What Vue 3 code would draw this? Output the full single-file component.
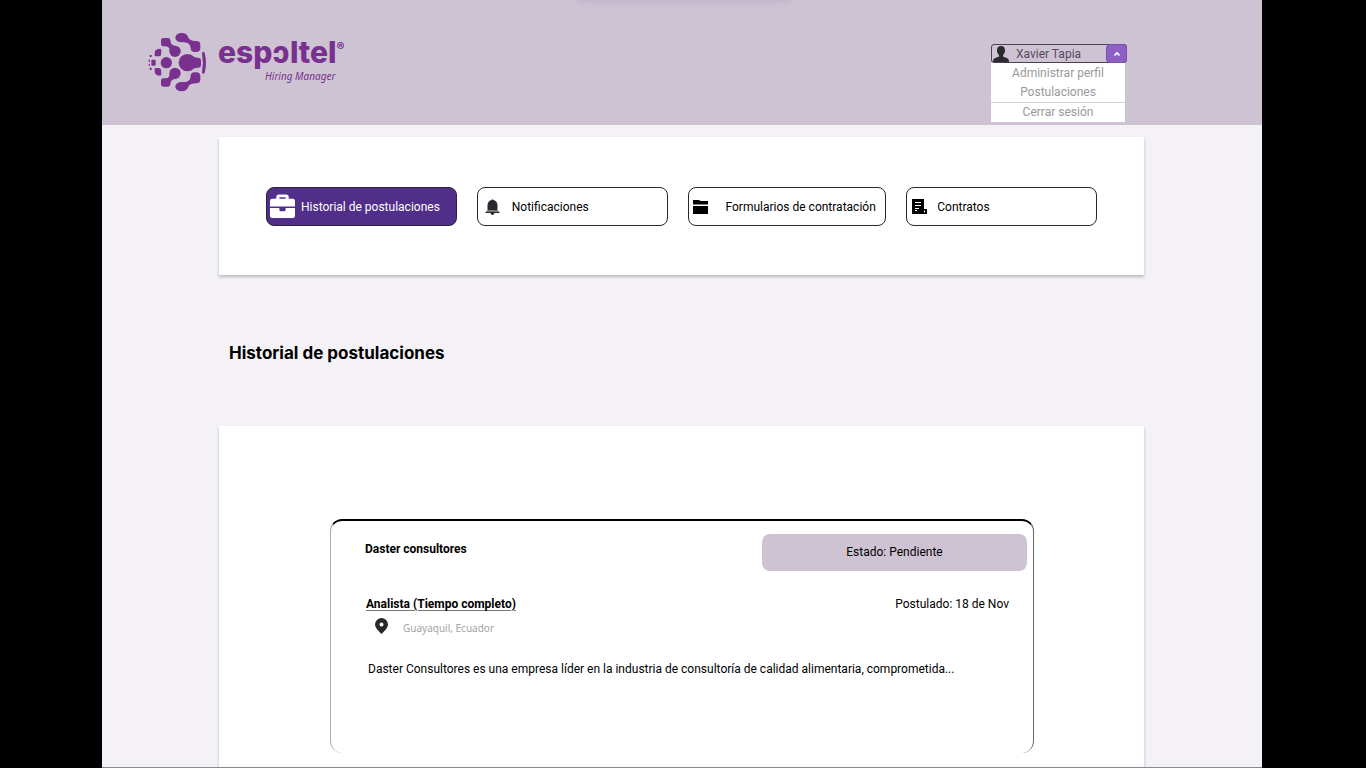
<script setup>
import { ref } from 'vue'

const menuOpen = ref(true)
const active = ref('historial')
const sections = [
  { id: 'historial', label: 'Historial de postulaciones' },
  { id: 'notificaciones', label: 'Notificaciones' },
  { id: 'formularios', label: 'Formularios de contratación' },
  { id: 'contratos', label: 'Contratos' },
]
const jobs = [
  {
    company: 'Daster consultores',
    status: 'Estado: Pendiente',
    role: 'Analista (Tiempo completo)',
    date: 'Postulado: 18 de Nov',
    place: 'Guayaquil, Ecuador',
    text: 'Daster Consultores es una empresa líder en la industria de consultoría de calidad alimentaria, comprometida...',
  },
]
</script>

<template>
  <div class="stage">
    <header class="top">
      <a class="brand" href="#">
        <svg class="mark" viewBox="24 36 180 180" aria-hidden="true">
          <g fill="#79308f">
            <ellipse cx="125" cy="53" rx="19" ry="14" />
            <rect x="152" y="63" width="29" height="33" rx="12" />
            <path d="M128 66 143 48Q146 62 164 63L153 84Q150 66 128 66z" />
            <rect x="63" y="54" width="28" height="25" rx="7" />
            <circle cx="105" cy="94" r="17" />
            <path d="M76 78 91 64Q93 77 108 78L90 95Q89 79 76 78z" />
            <ellipse cx="125" cy="200" rx="19" ry="14" />
            <rect x="152" y="157" width="29" height="33" rx="12" />
            <path d="M128 187 143 205Q146 191 164 190L153 169Q150 187 128 187z" />
            <rect x="63" y="175" width="28" height="25" rx="7" />
            <circle cx="105" cy="160" r="17" />
            <path d="M76 176 91 190Q93 177 108 176L90 159Q89 175 76 176z" />
            <path d="M45 94q3-8 15-8 5 0 4 7l-1 11q-1 5-6 5H47q-4 0-3-6zM45 159q3 8 15 8 5 0 4-7l-1-11q-1-5-6-5H47q-4 0-3 6z" />
            <rect x="34" y="119" width="13" height="18" rx="3" />
            <circle cx="79" cy="128" r="17" />
            <circle cx="142" cy="128" r="26" />
            <path d="M150 103Q162 114 174 113 183 113 183 122V134Q183 143 174 143 162 142 150 153z" />
            <path d="M186 99q3-7 8 0 8 30 0 59-5 6-8 0 5-30 0-59zM29 105h6v6h-6zM29 143h6v7h-6zM26 119h4v6h-4zM26 131h4v6h-4z" />
          </g>
        </svg>
        <span class="words">
          <span class="name">espɔltel<sup>®</sup></span>
          <span class="sub">Hiring Manager</span>
        </span>
      </a>

      <div class="account">
        <button class="user" type="button" :aria-expanded="menuOpen" @click="menuOpen = !menuOpen">
          <svg class="person" viewBox="0 0 16 16" aria-hidden="true">
            <path fill="#2b2a2e" d="M8 0c3 0 4 2 4 4.600 0 2-1 3.600-2 4.600v1.300l4.200 1.700C15.500 12.800 16 14 16 16H0c0-2 .5-3.200 1.800-3.800L6 10.500V9.200c-1-1-2-2.600-2-4.600C4 2 5 0 8 0z" />
          </svg>
          <span class="username">Xavier Tapia</span>
          <span class="caret">
            <svg viewBox="0 0 8 6" aria-hidden="true"><path d="M1.500 4.500 4 2l2.500 2.500" fill="none" stroke="#fff" stroke-width="1.700" /></svg>
          </span>
        </button>
        <nav v-if="menuOpen" class="menu" aria-label="Cuenta">
          <a href="#">Administrar perfil</a>
          <a href="#">Postulaciones</a>
          <a href="#" class="logout">Cerrar sesión</a>
        </nav>
      </div>
    </header>

    <main>
      <nav class="panel tabs" aria-label="Secciones">
        <button
          v-for="s in sections"
          :key="s.id"
          type="button"
          :class="['tab', s.id, { active: active === s.id }]"
          @click="active = s.id"
        >
          <svg v-if="s.id === 'historial'" class="icon" viewBox="0 0 24 24" aria-hidden="true">
            <path fill="currentColor" fill-rule="evenodd" d="M6 4.500V3q0-2.500 2.500-2.500h7Q18 .5 18 3v1.500h4q2 0 2 2V12H0V6.500q0-2 2-2zm3 0h6V3H9zM0 13.500h9V15q0 1.500 1.500 1.500h3Q15 16.500 15 15v-1.500h9V21q0 2-2 2H2q-2 0-2-2z" />
          </svg>
          <svg v-else-if="s.id === 'notificaciones'" class="icon" viewBox="0 0 14 16" aria-hidden="true">
            <path fill="#29282c" d="M6 1q1-1.500 2 0 4 1 4 5.500V11H2V6.500Q2 2 6 1zM5 14h4q-.5 2-2 2t-2-2z" />
            <path fill="#77767a" d="M2 11h10l2 2.500H0z" />
            <path fill="#29282c" d="M0 13h14v1H0z" />
          </svg>
          <svg v-else-if="s.id === 'formularios'" class="icon" viewBox="0 0 15 14" aria-hidden="true">
            <path fill="#000" d="M0 0h6l1.500 1H15v3.500H0zM0 6h15v8H0z" />
          </svg>
          <svg v-else class="icon" viewBox="0 0 15 15" aria-hidden="true">
            <path fill="#000" d="M0 0h12v10h3v5H0z" />
            <path d="M3 3.500h6M3 6.500h6M3 9.500h4M3 11.500h2M12.500 11.500v2" stroke="#fff" fill="none" />
          </svg>
          <span>{{ s.label }}</span>
        </button>
      </nav>

      <h1>Historial de postulaciones</h1>

      <section class="panel list">
        <article v-for="j in jobs" :key="j.company" class="job">
          <div class="row head">
            <h2>{{ j.company }}</h2>
            <span class="status">{{ j.status }}</span>
          </div>
          <div class="row role">
            <a href="#">{{ j.role }}</a>
            <span class="date">{{ j.date }}</span>
          </div>
          <div class="place">
            <svg viewBox="0 0 13 16" aria-hidden="true">
              <path fill="#29282c" fill-rule="evenodd" d="M6.500 0A6.500 6.500 0 0 1 13 6.500Q13 10 6.500 16 0 10 0 6.500A6.500 6.500 0 0 1 6.500 0zm0 4.500a2 2 0 1 0 0 4 2 2 0 0 0 0-4z" />
            </svg>
            <span>{{ j.place }}</span>
          </div>
          <p>{{ j.text }}</p>
        </article>
      </section>
    </main>
  </div>
</template>

<style>
body {
  margin: 0;
  background: #000;
}
</style>

<style scoped>
* {
  box-sizing: border-box;
}
.stage {
  height: 100vh;
  margin: 0 104px 0 102px;
  overflow: hidden;
  position: relative;
  background: #f4f2f7;
  font-family: Roboto, "Noto Sans", sans-serif;
  color: #000;
}
.stage::after {
  content: "";
  position: absolute;
  left: 0;
  right: 0;
  bottom: 0;
  height: 1px;
  background: #8b8a8d;
}
a {
  color: inherit;
  text-decoration: none;
}
button {
  font: inherit;
  color: inherit;
  cursor: pointer;
}
.top {
  position: relative;
  display: flex;
  justify-content: space-between;
  align-items: flex-start;
  height: 125px;
  padding: 32px 135px 0 46px;
  background: #cec3d3;
}
.top::before {
  content: "";
  position: absolute;
  top: -8px;
  left: 41%;
  width: 212px;
  height: 6px;
  box-shadow: 0 0 8px #a597b2;
}
.brand {
  display: flex;
  color: #79308f;
}
.mark {
  width: 60px;
  height: 60px;
}
.words {
  display: flex;
  flex-direction: column;
  margin-left: 10px;
  padding-top: 2px;
}
.name {
  font-family: Inter, sans-serif;
  font-size: 30px;
  font-weight: 800;
  line-height: 36px;
  white-space: nowrap;
}
.name sup {
  font-size: 12px;
  line-height: 10px;
  vertical-align: 12px;
}
.sub {
  align-self: flex-end;
  margin-right: 9px;
  font-family: "Noto Sans", sans-serif;
  font-size: 10px;
  font-style: italic;
  line-height: 12px;
}
.account {
  width: 136px;
  margin-top: 12px;
}
.user {
  display: flex;
  align-items: center;
  width: 100%;
  height: 19px;
  padding: 0 0 0 1px;
  border: 1px solid #49424f;
  border-radius: 3px;
  background: none;
  color: #554b5b;
  font-size: 12px;
}
.person {
  width: 16px;
  height: 16px;
}
.username {
  flex: 1;
  padding-left: 7px;
  text-align: left;
}
.caret {
  display: flex;
  align-items: center;
  justify-content: center;
  width: 21px;
  height: 19px;
  margin-right: -1px;
  border: 1px solid #7a50b0;
  border-radius: 4px;
  background: #8f60c4;
}
.caret svg {
  width: 8px;
  height: 6px;
}
.menu {
  display: flex;
  flex-direction: column;
  width: 134px;
  padding-top: 1px;
  background: #fff;
  color: #9a989c;
  font-size: 12px;
  line-height: 19px;
  text-align: center;
}
.logout {
  border-top: 1px solid #d5d2da;
}
main {
  padding: 12px 118px 0 117px;
}
.panel {
  background: #fff;
  box-shadow: 0 2px 3px #bab8be;
}
.tabs {
  display: grid;
  grid-template-columns: 191fr 191fr 199fr 191fr;
  gap: 20px;
  padding: 50px 47px 49px;
}
.tab {
  display: flex;
  align-items: center;
  height: 39px;
  padding: 0;
  border: 1px solid #29282c;
  border-radius: 8px;
  background: #fff;
  font-size: 12px;
  white-space: nowrap;
}
.tab.active {
  background: #512e89;
  color: #fff;
}
.tab .icon {
  flex: none;
}
.historial .icon {
  width: 25px;
  height: 25px;
  margin: 0 6px 0 3px;
}
.notificaciones .icon {
  width: 15px;
  height: 16px;
  margin: 0 12px 0 7px;
}
.formularios .icon {
  width: 15px;
  height: 14px;
  margin: 0 18px 0 4px;
}
.contratos .icon {
  width: 15px;
  height: 15px;
  margin: 0 10px 0 5px;
}
h1 {
  margin: 0;
  padding: 66px 10px 61px;
  font-family: Inter, sans-serif;
  font-size: 17px;
  font-weight: 700;
  line-height: 24px;
}
.list {
  min-height: 360px;
  padding: 93px 110px 40px 111px;
}
.job {
  height: 234px;
  padding: 13px 6px 0 34px;
  border: 1px solid;
  border-width: 2px 1px 0 1px;
  border-color: #000 #666 #000 #aaa;
  border-radius: 12px;
}
.row {
  display: flex;
  justify-content: space-between;
}
h2 {
  margin: 0;
  padding-top: 5px;
  font-size: 12px;
  font-weight: 700;
  line-height: 20px;
}
.status {
  width: 265px;
  border-radius: 8px;
  background: #cec3d3;
  font-size: 12px;
  line-height: 37px;
  text-align: center;
}
.role {
  padding: 24px 18px 0 1px;
  font-size: 12px;
  line-height: 18px;
}
.role a {
  font-weight: 700;
  text-decoration: underline;
  text-decoration-color: #777;
  text-underline-offset: 2px;
}
.place {
  display: flex;
  align-items: flex-start;
  gap: 15px;
  padding: 5px 0 0 10px;
  color: #a3a2a5;
  font-family: "Noto Sans", sans-serif;
  font-size: 10px;
  line-height: 20px;
}
.place svg {
  width: 13px;
  height: 16px;
}
p {
  margin: 21px 0 0 3px;
  font-size: 12px;
  line-height: 20px;
}
</style>
